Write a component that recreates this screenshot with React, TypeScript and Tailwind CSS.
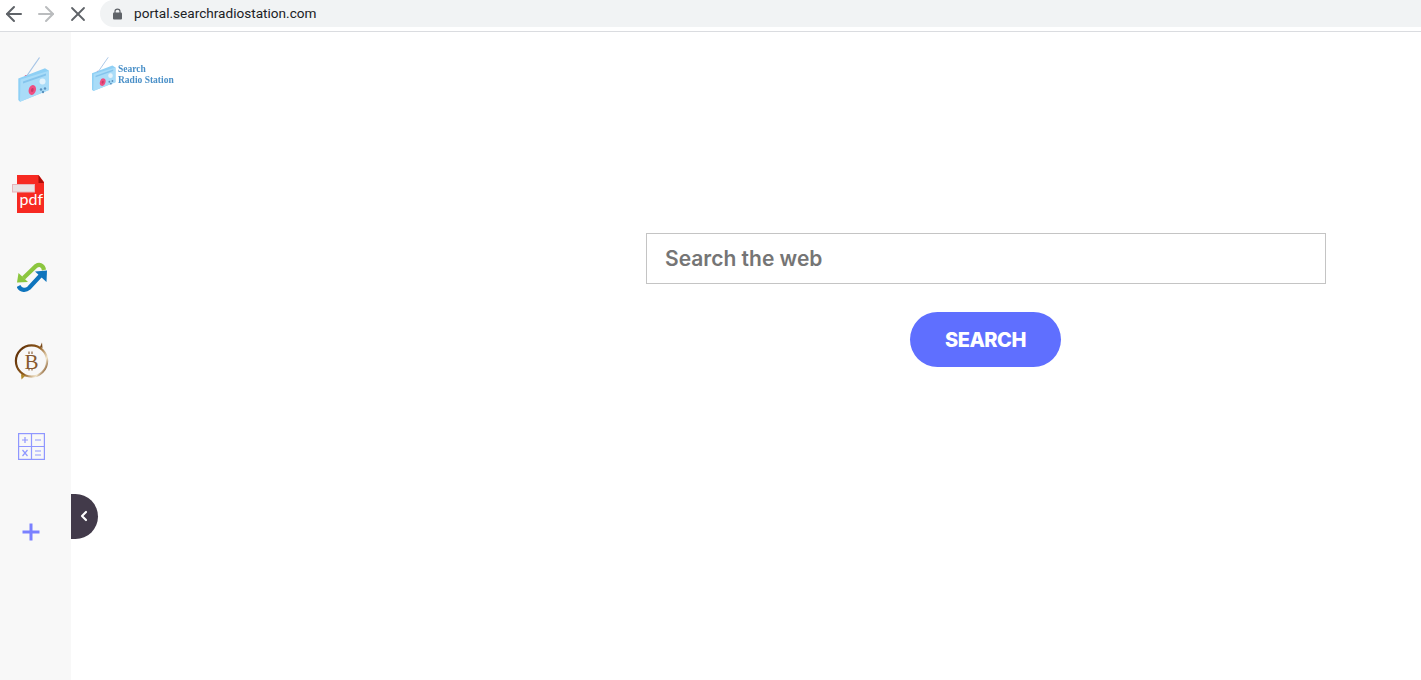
import { ArrowLeft, ArrowRight, ChevronLeft, X } from 'lucide-react';

function RadioIcon({ className }: { className: string }) {
  return (
    <svg className={className} viewBox="0 0 34 48" fill="none">
      <path d="M9 21 L22.5 1.5" stroke="#a5c4e6" strokeWidth="1.2" />
      <circle cx="9" cy="20.5" r="1.4" fill="#ec5a86" />
      <path d="M1.3 22.5 L28 12.3 L32 14.7 L32 34 L3 45.7 L1.3 44 Z" fill="#8fd0f5" />
      <path d="M3.5 23.5 L32 14.7 L32 34 L3 45.7 Z" fill="#a9dcf8" />
      <path d="M6 25.5 L29 17.5 L29 19.5 L6 27.5 Z" fill="#85c4ec" />
      <ellipse cx="15.3" cy="34" rx="3.6" ry="5" transform="rotate(18 15.3 34)" fill="#ee4f82" />
      <ellipse cx="15.3" cy="34" rx="1.3" ry="2" transform="rotate(18 15.3 34)" fill="#c73a69" />
      <circle cx="25.5" cy="25.5" r="3" fill="#e3f3fc" />
      <circle cx="24" cy="33.5" r="1.2" fill="#5b92bf" />
      <circle cx="28" cy="32.5" r="1.2" fill="#5b92bf" />
      <circle cx="26" cy="36" r="1.2" fill="#5b92bf" />
    </svg>
  );
}

function PdfIcon() {
  return (
    <svg className="h-[38px] w-[32px]" viewBox="0 0 32 38">
      <path d="M5 0 H26.5 L32 7 V38 H5 Z" fill="#f72a22" />
      <path d="M26.5 0 L32 8 H26.5 Z" fill="#a80f0a" />
      <rect x="0.5" y="9.5" width="22" height="7.5" fill="#e8e2e3" stroke="#e8b4ba" />
      <text x="7.5" y="30" fontSize="16" fill="#ffffff" fontFamily="'Lato', sans-serif" fontWeight="400">
        pdf
      </text>
    </svg>
  );
}

function SyncIcon() {
  return (
    <svg className="h-[30px] w-[30px]" viewBox="0 0 30 30" fill="none">
      <path d="M27 8 C26 2.5 22 2 19 4 L6.5 16" stroke="#8cc63f" strokeWidth="4.2" />
      <path d="M0 20.5 L11 20 L1.5 11 Z" fill="#8cc63f" />
      <path d="M1.5 24 C4 29 9 28.5 12 26 L24 13" stroke="#0f75bd" strokeWidth="4.2" />
      <path d="M18 9.5 L30 8.5 L29.5 20 Z" fill="#0f75bd" />
    </svg>
  );
}

function BitcoinIcon() {
  return (
    <svg className="h-[38px] w-[36px]" viewBox="0 0 36 38" fill="none">
      <defs>
        <linearGradient id="ring" x1="0" y1="0.2" x2="1" y2="0.8">
          <stop offset="0" stopColor="#5e2f08" />
          <stop offset="0.5" stopColor="#8f5a1c" />
          <stop offset="0.82" stopColor="#f2e6cc" />
          <stop offset="1" stopColor="#7a4a1a" />
        </linearGradient>
      </defs>
      <circle cx="17.5" cy="19" r="15.6" stroke="url(#ring)" strokeWidth="2.2" />
      <path d="M26 5 L28 0.5 L28.5 6 Z" fill="#7a4a1a" />
      <path d="M7 32 L7.5 37.5 L11 34 Z" fill="#b08a2c" />
      <text x="17.5" y="26.5" textAnchor="middle" fontSize="21" fill="#87592e" fontFamily="'Liberation Serif', serif">
        B
      </text>
      <path d="M15 9.5 V12 M18 9.5 V12 M15 26 V28.5 M18 26 V28.5" stroke="#87592e" strokeWidth="1.1" />
    </svg>
  );
}

function CalcIcon() {
  return (
    <svg className="h-[27px] w-[27px]" viewBox="0 0 27 27" fill="none" stroke="#8f97ff">
      <rect x="0.6" y="0.6" width="25.8" height="25.8" strokeWidth="1.2" />
      <path d="M13.5 0.5 V26.5 M0.5 13.5 H26.5" strokeWidth="1.2" />
      <path d="M4 7 H10 M7 4 V10 M17 7 H23 M4.5 17 L9.5 23 M9.5 17 L4.5 23 M17 18 H23 M17 22 H23" strokeWidth="1.2" />
    </svg>
  );
}

export default function App() {
  return (
    <div className="flex h-[680px] flex-col overflow-hidden bg-white font-['Inter',sans-serif]">
      <header className="flex h-[32px] shrink-0 items-start border-b border-[#dadce0] bg-white">
        <div className="flex h-[27px] items-center gap-[8px] pl-[2px]">
          <ArrowLeft className="h-[24px] w-[24px] text-[#5f6368]" strokeWidth={2} />
          <ArrowRight className="h-[24px] w-[24px] text-[#babcbe]" strokeWidth={2} />
          <X className="h-[24px] w-[24px] text-[#5f6368]" strokeWidth={1.8} />
        </div>
        <div className="ml-[10px] flex h-[27px] flex-1 items-center rounded-l-full bg-[#f1f3f4] pl-[13px]">
          <svg className="h-[12px] w-[9px] text-[#5f6368]" viewBox="0 0 9 12" fill="none">
            <path d="M2 5 V3.2 C2 0.3 7 0.3 7 3.2 V5" stroke="currentColor" strokeWidth="1.2" />
            <rect x="0" y="4.5" width="9" height="7" rx="1" fill="currentColor" />
          </svg>
          <span className="ml-[12px] font-['Roboto',sans-serif] text-[13.6px] text-[#202124]">
            portal.searchradiostation.com
          </span>
        </div>
      </header>

      <div className="flex flex-1">
        <aside className="relative w-[71px] shrink-0 bg-[#f8f8f8]">
          <div className="flex flex-col pl-[12px] pt-[24px]">
            <RadioIcon className="ml-[5px] h-[48px] w-[34px] blur-[0.3px]" />
            <div className="mt-[71px]">
              <PdfIcon />
            </div>
            <div className="ml-[5px] mt-[49px]">
              <SyncIcon />
            </div>
            <div className="ml-[2px] mt-[50px]">
              <BitcoinIcon />
            </div>
            <div className="ml-[6px] mt-[53px]">
              <CalcIcon />
            </div>
            <div className="ml-[10px] mt-[63px] text-[#7a80ff]">
              <svg className="h-[18px] w-[18px]" viewBox="0 0 18 18" fill="currentColor">
                <path d="M7.5 0.5 H10.5 V7.5 H17.5 V10.5 H10.5 V17.5 H7.5 V10.5 H0.5 V7.5 H7.5 Z" />
              </svg>
            </div>
          </div>
          <button className="absolute left-[71px] top-[462px] flex h-[45px] w-[27px] items-center justify-center rounded-r-full bg-[#423a4a] pb-[1px] pr-[2px] text-white">
            <ChevronLeft className="h-[16px] w-[16px]" strokeWidth={3.2} />
          </button>
        </aside>

        <main className="flex flex-1 flex-col">
          <div className="flex items-center pl-[20px] pt-[24px]">
            <RadioIcon className="h-[37px] w-[26px] blur-[0.3px]" />
            <div className="ml-[1px] pt-[1px] font-['Liberation_Serif',serif] text-[9.5px] font-bold leading-[11px] text-[#4a90c8] blur-[0.4px]">
              <div>Search</div>
              <div>Radio Station</div>
            </div>
          </div>
          <div className="flex justify-end pr-[95px] pt-[140px]">
            <div className="flex w-[680px] flex-col items-start">
              <input
                placeholder="Search the web"
                className="h-[51px] w-full border border-[#c4c4c4] px-[18px] text-[21px] font-semibold outline-none placeholder:text-[#757575]"
              />
              <button className="ml-[264px] mt-[28px] h-[55px] w-[151px] rounded-full bg-[#5f6fff] text-[20px] font-extrabold tracking-[-0.5px] text-white">
                SEARCH
              </button>
            </div>
          </div>
        </main>
      </div>
    </div>
  );
}
